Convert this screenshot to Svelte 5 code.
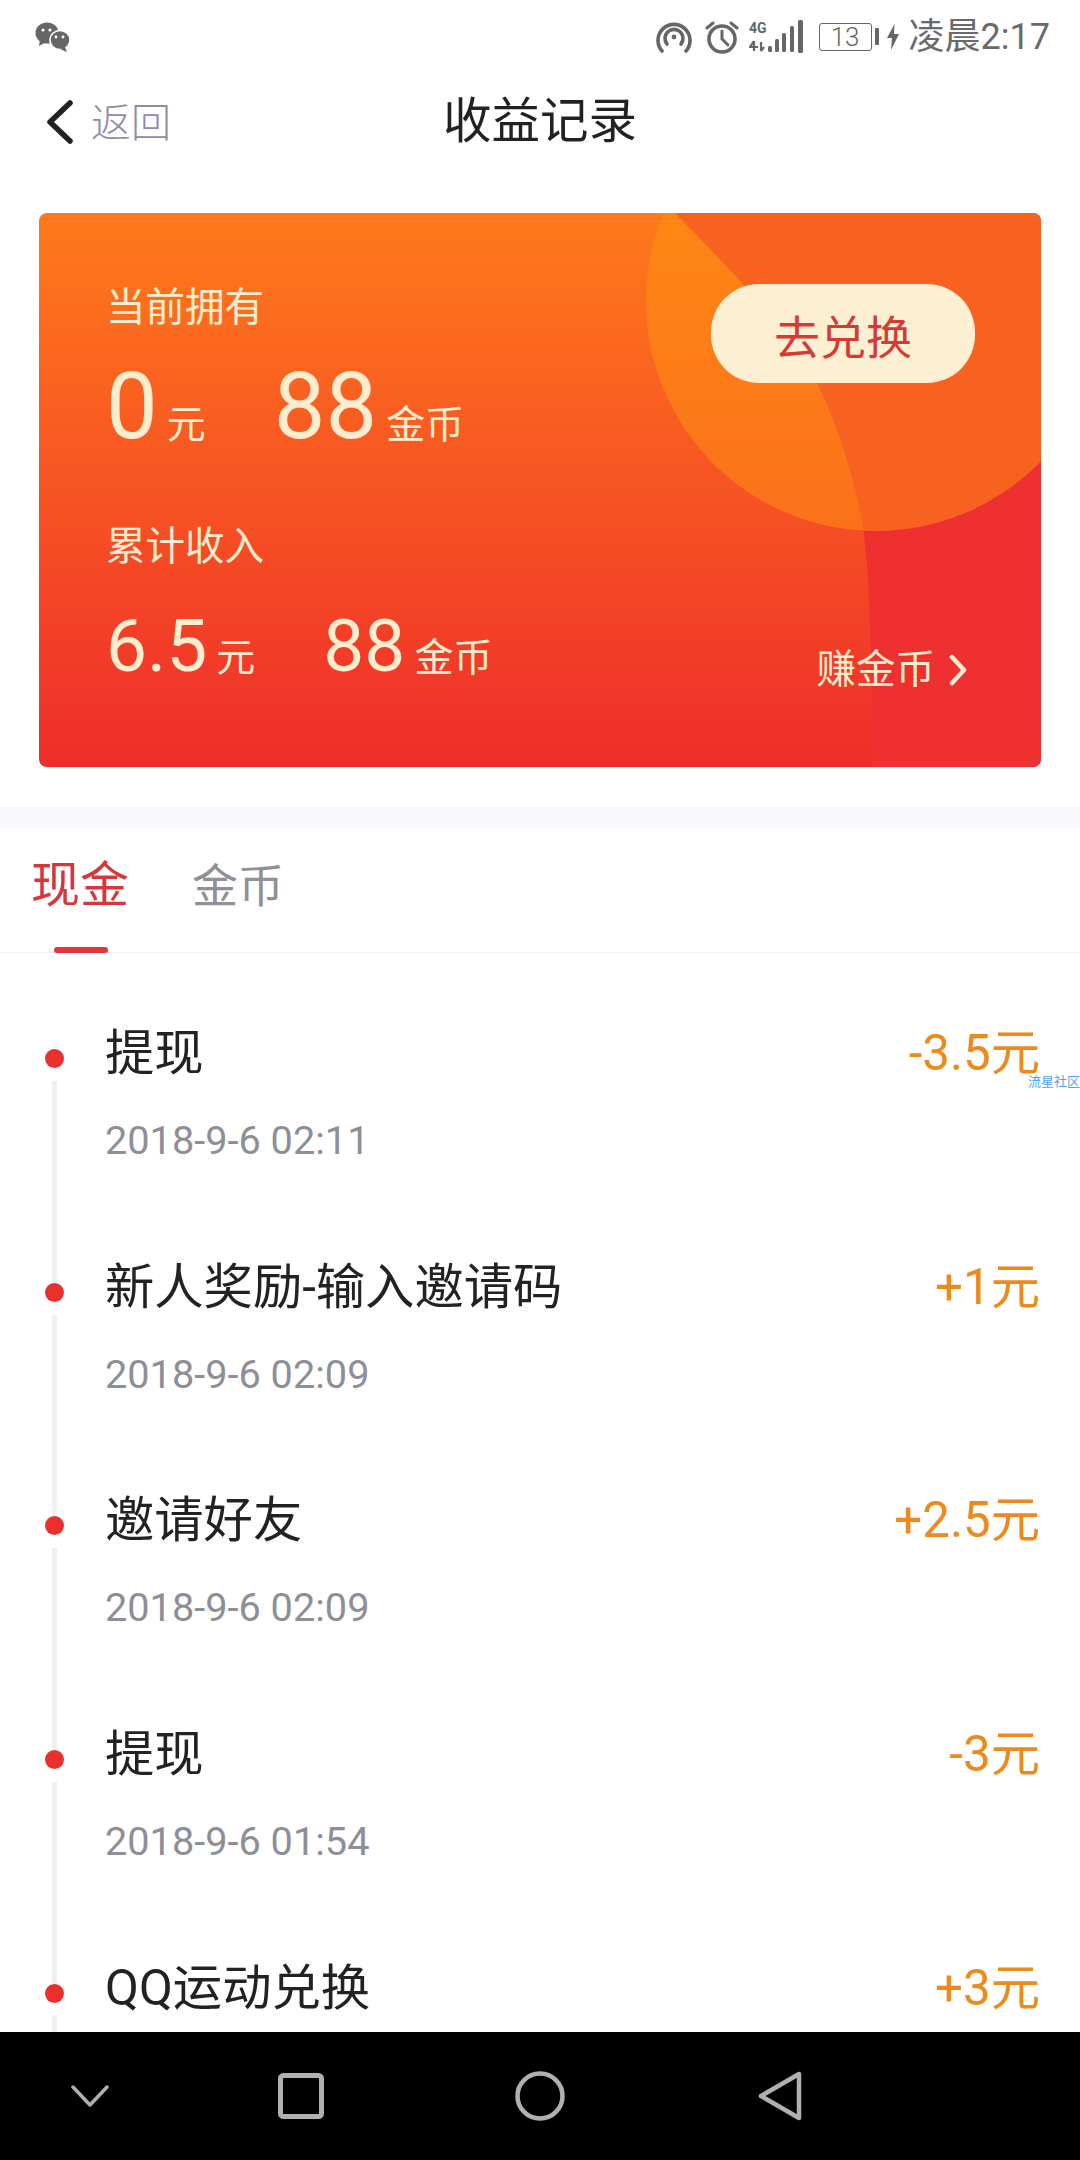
<script>
  const records = [
    { title: '提现', date: '2018-9-6 02:11', amount: '-3.5元' },
    { title: '新人奖励-输入邀请码', date: '2018-9-6 02:09', amount: '+1元' },
    { title: '邀请好友', date: '2018-9-6 02:09', amount: '+2.5元' },
    { title: '提现', date: '2018-9-6 01:54', amount: '-3元' },
    { title: 'QQ运动兑换', amount: '+3元' }
  ];
</script>

<div class="phone">
  <div class="status">
    <svg class="wechat" width="36" height="30" viewBox="0 0 36 30">
      <ellipse cx="12" cy="11" rx="11.5" ry="10.5" fill="#666" />
      <path d="M5 17 L4 24 L11 20 Z" fill="#666" />
      <ellipse cx="25" cy="18" rx="10" ry="9.5" fill="#666" stroke="#fff" stroke-width="1.5" />
      <path d="M30 25 L32 30 L25 27 Z" fill="#666" />
      <circle cx="8" cy="8" r="1.6" fill="#fff" />
      <circle cx="15" cy="8" r="1.6" fill="#fff" />
      <circle cx="21" cy="15" r="1.4" fill="#fff" />
      <circle cx="28" cy="15" r="1.4" fill="#fff" />
    </svg>
    <div class="status-right">
      <svg width="36" height="32" viewBox="0 0 36 32" fill="none" stroke="#666" stroke-width="3.6" stroke-linecap="round">
        <path d="M6 30 A16 16 0 1 1 30 30" />
        <path d="M11 23 A9 9 0 1 1 25 23" />
        <circle cx="18" cy="16" r="2.4" fill="#666" stroke="none" />
      </svg>
      <svg class="alarm" width="34" height="34" viewBox="0 0 34 34" fill="none" stroke="#666" stroke-linecap="round">
        <circle cx="17" cy="19" r="13" stroke-width="3.6" />
        <path d="M17 11 V19 L23 25" stroke-width="3" />
        <path d="M2 8 L8 3 M32 8 L26 3" stroke-width="3" />
      </svg>
      <svg class="signal" width="56" height="34" viewBox="0 0 56 34">
        <text x="0" y="13" class="net">4G</text>
        <path d="M5 21 V31 M5 21 L1 27 H9 M12 22 V31 M12 31 L15 27" fill="none" stroke="#666" stroke-width="2.2" />
        <rect x="19" y="26" width="4" height="6" rx="1.5" fill="#666" />
        <rect x="26" y="19" width="4" height="13" rx="1.5" fill="#666" />
        <rect x="33" y="13" width="4" height="19" rx="1.5" fill="#666" />
        <rect x="41" y="6" width="4" height="26" rx="1.5" fill="#666" />
        <rect x="49" y="0" width="5" height="33" rx="1.5" fill="#666" />
      </svg>
      <div class="battery"><span>13</span></div>
      <div class="nub"></div>
      <svg class="bolt" width="12" height="26" viewBox="0 0 12 26">
        <path d="M7.5 0 L0 14 H5 L4 26 L12 10 H7 Z" fill="#666" />
      </svg>
      <div class="clock">凌晨2:17</div>
    </div>
  </div>

  <header class="topbar">
    <div class="back">
      <svg width="28" height="44" viewBox="0 0 28 44" fill="none" stroke="#222" stroke-width="5.5" stroke-linecap="round" stroke-linejoin="round">
        <path d="M24 3 L4 22 L24 41" />
      </svg>
      <span>返回</span>
    </div>
    <h1>收益记录</h1>
  </header>

  <section class="card">
    <svg class="deco" width="1002" height="554" viewBox="0 0 1002 554">
      <path d="M636 0 C680 45 745 110 778 170 C805 225 818 280 824 314 C830 360 833 420 833 554 H1002 V0 Z" fill="#ef3030" />
      <circle cx="837" cy="88" r="230" fill="#ff9410" fill-opacity="0.5" />
    </svg>

    <div class="stats">
      <div class="label">当前拥有</div>
      <div class="values big">
        <span class="pair"><b>0</b><i>元</i></span>
        <span class="pair"><b>88</b><i>金币</i></span>
      </div>
      <div class="label second">累计收入</div>
      <div class="values small">
        <span class="pair"><b>6.5</b><i>元</i></span>
        <span class="pair"><b>88</b><i>金币</i></span>
      </div>
    </div>

    <div class="actions">
      <div class="exchange">去兑换</div>
      <div class="earn">
        赚金币
        <svg width="18" height="32" viewBox="0 0 18 32" fill="none" stroke="#fdeccd" stroke-width="4.5" stroke-linecap="round" stroke-linejoin="round">
          <path d="M3 3 L15 16 L3 29" />
        </svg>
      </div>
    </div>
  </section>

  <div class="band"></div>

  <nav class="tabs">
    <div class="tab active">现金</div>
    <div class="tab">金币</div>
  </nav>

  <main class="list">
    {#each records as r}
      <div class="row">
        <div class="rail"><span class="dot"></span><span class="line"></span></div>
        <div class="info">
          <div class="title">{r.title}</div>
          {#if r.date}
            <div class="date">{r.date}</div>
          {/if}
        </div>
        <div class="amount">{r.amount}</div>
      </div>
    {/each}
    <span class="mark">流星社区</span>
  </main>

  <footer class="navbar">
    <svg width="38" height="22" viewBox="0 0 38 22" fill="none" stroke="#b0b0b0" stroke-width="3.5" stroke-linecap="round" stroke-linejoin="round">
      <path d="M2 2 L19 20 L36 2" />
    </svg>
    <svg width="46" height="46" viewBox="0 0 46 46" fill="none" stroke="#b0b0b0" stroke-width="5">
      <rect x="2.5" y="2.5" width="41" height="41" rx="3" />
    </svg>
    <svg width="50" height="50" viewBox="0 0 50 50" fill="none" stroke="#b0b0b0" stroke-width="4.5">
      <circle cx="25" cy="25" r="22.5" />
    </svg>
    <svg width="44" height="50" viewBox="0 0 44 50" fill="none" stroke="#b0b0b0" stroke-width="4.5" stroke-linejoin="round">
      <path d="M41 3 V47 L3 25 Z" />
    </svg>
  </footer>
</div>

<style>
  :global(body) {
    margin: 0;
    background: #fff;
  }

  .phone {
    width: 1080px;
    height: 2160px;
    display: flex;
    flex-direction: column;
    overflow: hidden;
    background: #fff;
    font-family: Roboto, "Noto Sans CJK SC", sans-serif;
    font-weight: 300;
  }

  .status {
    height: 73px;
    flex: none;
    display: flex;
    justify-content: space-between;
    align-items: center;
    padding: 0 30px 0 35px;
  }

  .status-right {
    display: flex;
    align-items: center;
    color: #666;
  }

  .alarm {
    margin-left: 13px;
  }

  .signal {
    margin-left: 10px;
  }

  .net {
    font-family: Roboto, sans-serif;
    font-size: 14px;
    font-weight: 700;
    fill: #666;
  }

  .battery {
    margin-left: 14px;
    width: 53px;
    height: 28px;
    box-sizing: border-box;
    border: 1.5px solid #666;
    border-radius: 3px;
    display: flex;
    align-items: center;
    justify-content: center;
    font-size: 26px;
    font-weight: 300;
  }

  .nub {
    margin-left: 3px;
    width: 4px;
    height: 17px;
    background: #666;
    border-radius: 1px;
  }

  .bolt {
    margin-left: 8px;
  }

  .clock {
    margin-left: 10px;
    font-size: 36px;
    line-height: 40px;
    font-weight: 400;
    color: #6a6a6a;
  }

  .topbar {
    height: 102px;
    flex: none;
    box-sizing: border-box;
    padding-bottom: 14px;
    position: relative;
    display: flex;
    align-items: center;
    justify-content: center;
  }

  .topbar h1 {
    margin: 0;
    font-size: 48.5px;
    font-weight: 400;
    color: #222;
  }

  .back {
    position: absolute;
    left: 46px;
    top: 22px;
    display: flex;
    align-items: center;
    gap: 17px;
    font-size: 40px;
    color: #8f8aa8;
  }

  .back span {
    margin-top: -4px;
  }

  .card {
    position: relative;
    flex: none;
    margin: 38px 39px 0;
    height: 554px;
    box-sizing: border-box;
    padding: 71px 67px 0;
    border-radius: 8px;
    overflow: hidden;
    display: flex;
    justify-content: space-between;
    background: linear-gradient(180deg, #ff7a1b 0%, #ee2d2b 100%);
    color: #fdeccd;
  }

  .deco {
    position: absolute;
    left: 0;
    top: 0;
  }

  .stats,
  .actions {
    position: relative;
  }

  .label {
    font-size: 39.5px;
    line-height: 48px;
    font-weight: 400;
  }

  .second {
    margin-top: 70px;
  }

  .values {
    display: flex;
    gap: 68px;
  }

  .big {
    margin-top: 29px;
  }

  .small {
    margin-top: 39px;
  }

  .pair {
    display: flex;
    align-items: baseline;
    gap: 9px;
  }

  .pair b {
    font-weight: 400;
    line-height: 1;
  }

  .big b {
    font-size: 92px;
  }

  .small b {
    font-size: 73px;
  }

  .pair i {
    font-style: normal;
    font-size: 39px;
    font-weight: 400;
    line-height: 1;
  }

  .actions {
    display: flex;
    flex-direction: column;
    align-items: flex-end;
    justify-content: space-between;
    height: 411px;
    margin-right: -1px;
  }

  .exchange {
    width: 264px;
    height: 99px;
    border-radius: 48px;
    background: #fdefd2;
    color: #d63a35;
    font-size: 46px;
    font-weight: 400;
    display: flex;
    align-items: center;
    justify-content: center;
  }

  .earn {
    display: flex;
    align-items: center;
    gap: 14px;
    margin-right: 8px;
    font-size: 39.5px;
    font-weight: 400;
    line-height: 50px;
  }

  .band {
    flex: none;
    margin-top: 40px;
    height: 21px;
    background: #f7f8fb;
  }

  .tabs {
    flex: none;
    height: 125px;
    box-sizing: border-box;
    border-bottom: 1px solid #f2f2f4;
    display: flex;
    align-items: center;
    gap: 63px;
    padding: 0 0 9px 31px;
  }

  .tab {
    position: relative;
    font-size: 46px;
    line-height: 60px;
    font-weight: 400;
    color: #909096;
  }

  .tab.active {
    font-size: 49px;
    color: #d9363a;
  }

  .tab.active::after {
    content: "";
    position: absolute;
    left: 23px;
    bottom: -37px;
    width: 54px;
    height: 6px;
    border-radius: 3px;
    background: #e0383a;
  }

  .list {
    flex: 1;
    min-height: 0;
    position: relative;
    overflow: hidden;
    padding-top: 68px;
  }

  .row {
    height: 233.7px;
    display: grid;
    grid-template-columns: 105px 1fr auto;
    padding-right: 40px;
  }

  .rail {
    display: flex;
    flex-direction: column;
    align-items: center;
    width: 108px;
    box-sizing: border-box;
    padding-top: 28px;
  }

  .dot {
    flex: none;
    width: 19px;
    height: 19px;
    border-radius: 50%;
    background: #e8302f;
  }

  .line {
    flex: 1;
    width: 5px;
    margin-top: 13px;
    margin-bottom: -28px;
    background: #f0f0f3;
  }

  .title {
    font-size: 49.3px;
    line-height: 64px;
    font-weight: 400;
    color: #222;
  }

  .date {
    margin-top: 34px;
    font-size: 39.7px;
    line-height: 44px;
    font-weight: 400;
    color: #8e8e96;
  }

  .amount {
    font-size: 49.3px;
    line-height: 64px;
    font-weight: 400;
    color: #ec8a1e;
  }

  .mark {
    position: absolute;
    right: 0;
    top: 122px;
    font-size: 13px;
    line-height: 14px;
    font-weight: 400;
    color: #4da3f0;
  }

  .navbar {
    flex: none;
    height: 128px;
    background: #000;
    display: flex;
    align-items: center;
    box-sizing: border-box;
  }

  .navbar svg:nth-child(1) {
    margin-left: 71px;
  }

  .navbar svg:nth-child(2) {
    margin-left: 169px;
  }

  .navbar svg:nth-child(3) {
    margin-left: 191px;
  }

  .navbar svg:nth-child(4) {
    margin-left: 193px;
  }
</style>
